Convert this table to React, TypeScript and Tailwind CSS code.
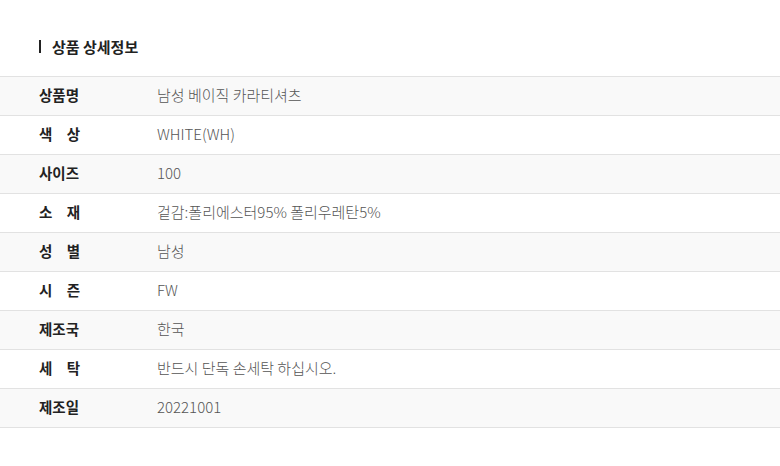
import React from "react";

const rows: { label: string[]; value: string }[] = [
  { label: ["상품명"], value: "남성 베이직 카라티셔츠" },
  { label: ["색", "상"], value: "WHITE(WH)" },
  { label: ["사이즈"], value: "100" },
  { label: ["소", "재"], value: "겉감:폴리에스터95% 폴리우레탄5%" },
  { label: ["성", "별"], value: "남성" },
  { label: ["시", "즌"], value: "FW" },
  { label: ["제조국"], value: "한국" },
  { label: ["세", "탁"], value: "반드시 단독 손세탁 하십시오." },
  { label: ["제조일"], value: "20221001" },
];

export default function App() {
  return (
    <div
      className="w-[780px] h-[466px] bg-white"
      style={{ fontFamily: '"Noto Sans CJK KR", "Noto Sans", sans-serif' }}
    >
      <div className="pt-[36px] pl-[39px] flex items-center h-[56px]">
        <div className="w-[2px] h-[13px] bg-[#222]" />
        <div className="ml-[11px] text-[15px] font-bold text-[#222] leading-none">
          상품 상세정보
        </div>
      </div>
      <div className="mt-[20px] border-t border-[#e2e2e2]">
        {rows.map((r, i) => (
          <div
            key={i}
            className={`flex items-center h-[39px] pb-[2px] border-b border-[#e2e2e2] ${
              i % 2 === 0 ? "bg-[#f9f9f9]" : "bg-white"
            }`}
          >
            <div className="pl-[39px] w-[157px] shrink-0">
              <div className="w-[41px] flex justify-between text-[14.5px] font-bold text-[#222]">
                {r.label.map((l, j) => (
                  <span key={j}>{l}</span>
                ))}
              </div>
            </div>
            <div className="text-[15px] text-[#555] font-light">
              {r.value}
            </div>
          </div>
        ))}
      </div>
    </div>
  );
}
